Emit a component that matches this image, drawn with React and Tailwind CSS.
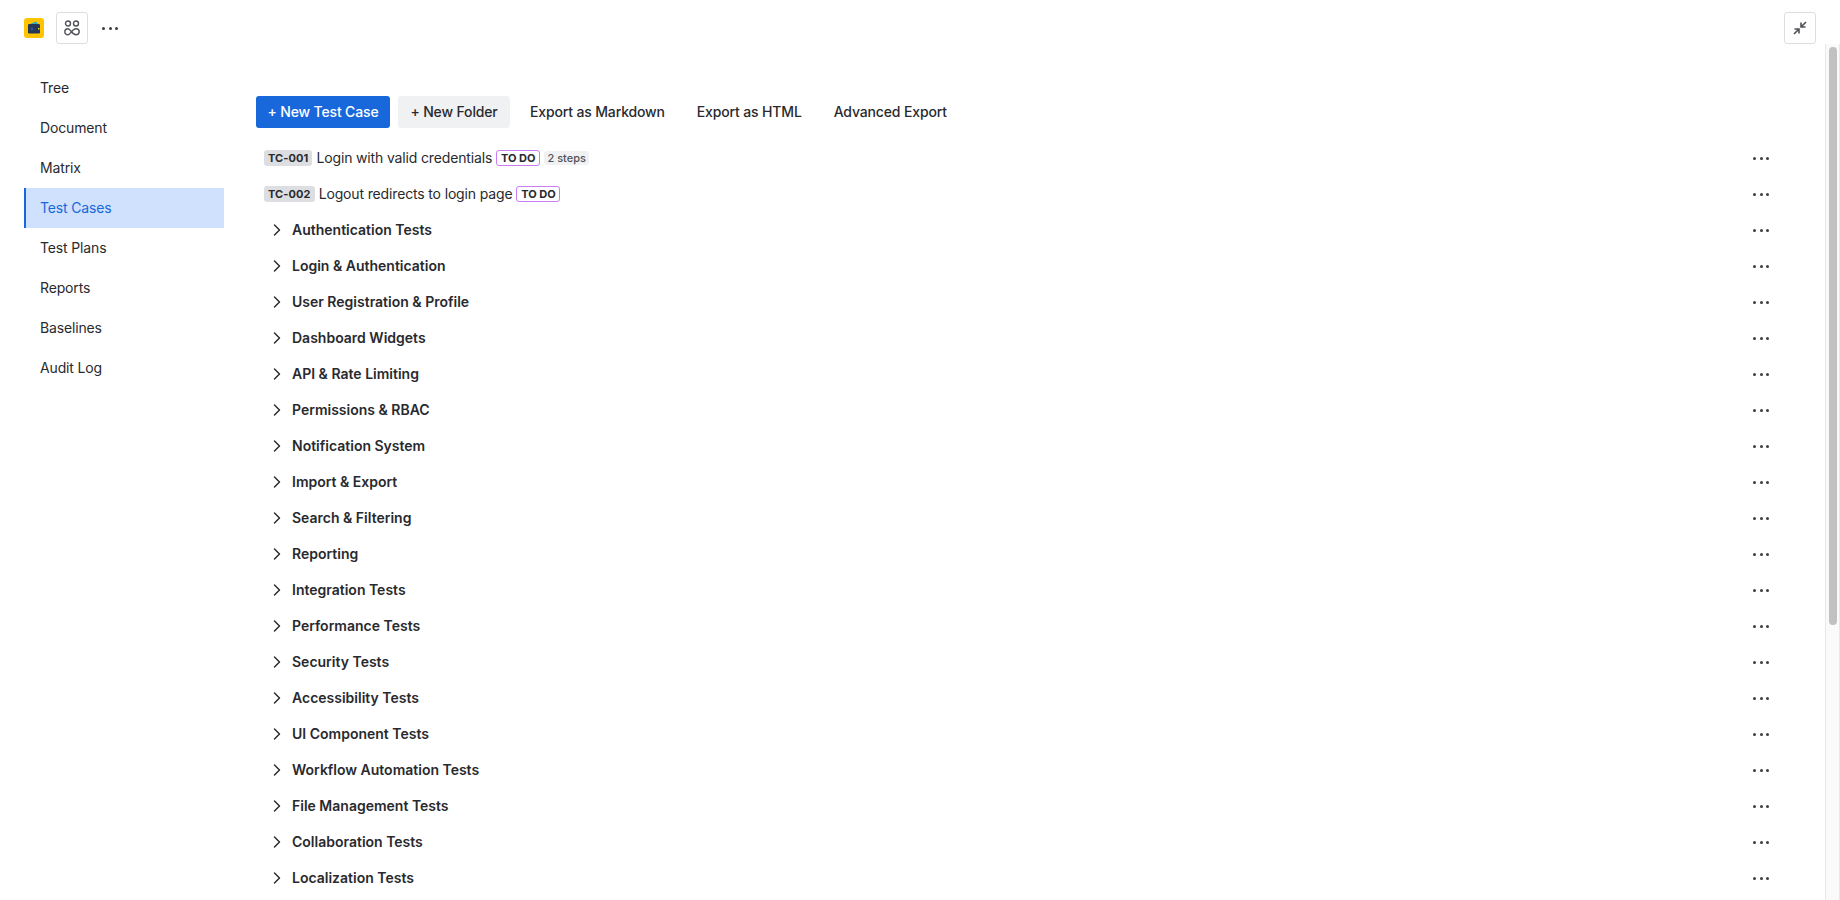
import { ChevronRight } from "lucide-react";

const NAV = ["Tree", "Document", "Matrix", "Test Cases", "Test Plans", "Reports", "Baselines", "Audit Log"];

const FOLDERS = [
  "Authentication Tests",
  "Login & Authentication",
  "User Registration & Profile",
  "Dashboard Widgets",
  "API & Rate Limiting",
  "Permissions & RBAC",
  "Notification System",
  "Import & Export",
  "Search & Filtering",
  "Reporting",
  "Integration Tests",
  "Performance Tests",
  "Security Tests",
  "Accessibility Tests",
  "UI Component Tests",
  "Workflow Automation Tests",
  "File Management Tests",
  "Collaboration Tests",
  "Localization Tests",
];

function Dots() {
  return (
    <span className="flex gap-[3.5px] w-4 items-center">
      <span className="w-[3px] h-[3px] rounded-full bg-[#3b3d42]" />
      <span className="w-[3px] h-[3px] rounded-full bg-[#3b3d42]" />
      <span className="w-[3px] h-[3px] rounded-full bg-[#3b3d42]" />
    </span>
  );
}

function Row({ children }) {
  return (
    <div className="h-9 flex items-center pl-2 shrink-0">
      <div className="flex-1 flex items-center min-w-0">{children}</div>
      <Dots />
    </div>
  );
}

function CaseRow({ id, title, steps }) {
  return (
    <Row>
      <span className="h-4 px-1 rounded-[3px] bg-[#dddee1] text-[11px] leading-4 font-bold tracking-[0.1px]">{id}</span>
      <span className="ml-1 text-sm tracking-[-0.15px]">{title}</span>
      <span className="ml-1 h-4 w-[44px] text-center border border-[#c97cf4] rounded-[3px] text-[11px] leading-[14px] font-bold">TO DO</span>
      {steps && <span className="ml-1 h-[14px] w-[45px] text-center rounded-[3px] bg-[#f0f1f2] text-[11px] leading-[14px] font-medium text-[#505258]">{steps}</span>}
    </Row>
  );
}

export default function App() {
  return (
    <div className="h-[900px] overflow-hidden bg-white flex flex-col font-['Inter','Liberation_Sans',sans-serif] text-[#292a2e]">
      <header className="h-11 shrink-0 flex items-center justify-between pl-6 pr-6 pt-3">
        <div className="flex items-center">
          <span className="w-5 h-5 rounded-[3px] bg-[#ffc400] flex items-center justify-center">
            <svg width="14" height="14" viewBox="0 0 14 14">
              <path d="M2 3.5 L9 0.5 L11.5 3.5 Z" fill="#2fa8c9" />
              <rect x="1" y="3" width="12" height="9.5" rx="1.2" fill="#253858" />
              <circle cx="5" cy="8" r="1.4" fill="#33558a" />
              <rect x="11" y="7" width="1.5" height="1.5" fill="#ffc400" />
            </svg>
          </span>
          <span className="ml-3 w-8 h-8 rounded-[3px] border border-[#dddee1] flex items-center justify-center">
            <svg width="16" height="16" viewBox="0 0 16 16" fill="none" stroke="#505258" strokeWidth="1.4">
              <circle cx="4" cy="3.5" r="2.5" />
              <circle cx="12" cy="3.5" r="2.5" />
              <path d="M0.8 12 C0.8 10 2.2 8.8 4 8.8 C6.5 8.8 8 14.8 12 14.8 C13.8 14.8 15.2 13.5 15.2 11.8 C15.2 10 13.8 8.8 12 8.8 C8 8.8 6.5 14.8 4 14.8 C2.2 14.8 0.8 13.6 0.8 12 Z" />
            </svg>
          </span>
          <span className="ml-[14px]">
            <Dots />
          </span>
        </div>
        <span className="w-8 h-8 rounded-[3px] border border-[#dddee1] flex items-center justify-center">
          <svg width="16" height="16" viewBox="0 0 16 16" fill="none" stroke="#505258" strokeWidth="1.6">
            <path d="M14 2 L9.5 6.5 M9 2.5 V7 H13.5" />
            <path d="M2 14 L6.5 9.5 M2.5 9 H7 V13.5" />
          </svg>
        </span>
      </header>

      <div className="flex flex-1 min-h-0">
        <nav className="w-[224px] shrink-0 pl-6 pt-6">
          {NAV.map((n) =>
            n === "Test Cases" ? (
              <div key={n} className="h-10 flex items-center pl-[14px] border-l-2 border-[#1868db] bg-[#cfe1fd] text-sm tracking-[-0.15px] text-[#1868db]">
                {n}
              </div>
            ) : (
              <div key={n} className="h-10 flex items-center pl-4 text-sm tracking-[-0.15px]">
                {n}
              </div>
            )
          )}
        </nav>

        <main className="flex-1 min-w-0 pl-8 pr-[56px] pt-[52px] overflow-hidden">
          <div className="flex items-center gap-2 h-8 mb-3 tracking-[-0.15px]">
            <button className="h-8 w-[134px] rounded-[3px] bg-[#1868db] text-white text-sm font-medium">+ New Test Case</button>
            <button className="h-8 w-[112px] rounded-[3px] bg-[#f0f1f2] text-sm font-medium">+ New Folder</button>
            <button className="h-8 px-3 rounded-[3px] text-sm font-medium">Export as Markdown</button>
            <button className="h-8 px-3 rounded-[3px] text-sm font-medium">Export as HTML</button>
            <button className="h-8 px-3 rounded-[3px] text-sm font-medium">Advanced Export</button>
          </div>
          <CaseRow id="TC-001" title="Login with valid credentials" steps="2 steps" />
          <CaseRow id="TC-002" title="Logout redirects to login page" />
          {FOLDERS.map((f) => (
            <Row key={f}>
              <ChevronRight size={20} strokeWidth={1.7} className="ml-[3px] shrink-0" />
              <span className="ml-[5px] text-sm font-semibold">{f}</span>
            </Row>
          ))}
        </main>

        <div className="w-[15px] shrink-0 bg-[#fafafa] border-x border-[#e8e8e8] pl-[3px] pt-[3px]">
          <div className="w-2 h-[578px] rounded-full bg-[#c1c1c1]" />
        </div>
      </div>
    </div>
  );
}
